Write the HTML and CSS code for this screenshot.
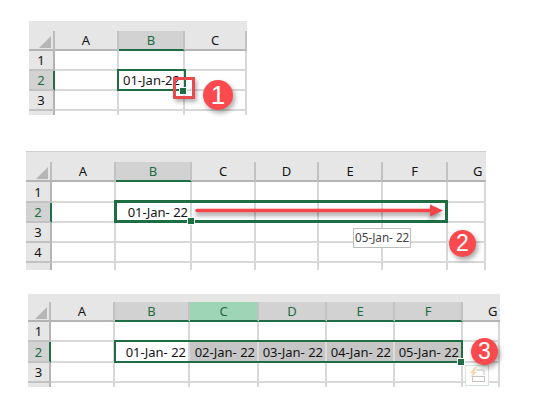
FILE: index.html

```html
<!DOCTYPE html>
<html lang="en">
<head>
  <meta charset="UTF-8" />
  <meta name="viewport" content="width=device-width, initial-scale=1.0"/>
  <title>Fill dates across cells</title>
  <link rel="stylesheet" href="styles.css">
</head>
<body>
  <main class="page">

    <!-- Step 1: the cell and its fill handle -->
    <section class="sheet sheet-one">
      <div class="strip"></div>
      <div class="corner"></div>
      <div class="col-head">A</div><div class="col-head active">B</div><div class="col-head">C</div>

      <div class="row-head">1</div><div class="cell"></div><div class="cell"></div><div class="cell"></div>
      <div class="row-head active">2</div><div class="cell"></div><div class="cell left">01-Jan-22</div><div class="cell"></div>
      <div class="row-head">3</div><div class="cell"></div><div class="cell"></div><div class="cell"></div>
      <div class="row-head tail"></div><div class="cell tail"></div><div class="cell tail"></div><div class="cell tail"></div>

      <div class="selection"></div>
      <div class="handle"></div>
      <div class="highlight"></div>
      <div class="badge">1</div>
    </section>

    <!-- Step 2: dragging across the row -->
    <section class="sheet sheet-two">
      <div class="strip"></div>
      <div class="corner"></div>
      <div class="col-head">A</div><div class="col-head active">B</div><div class="col-head">C</div><div class="col-head">D</div><div class="col-head">E</div><div class="col-head">F</div><div class="col-head cut">G</div>

      <div class="row-head">1</div><div class="cell"></div><div class="cell"></div><div class="cell"></div><div class="cell"></div><div class="cell"></div><div class="cell"></div><div class="cell"></div>
      <div class="row-head active">2</div><div class="cell"></div><div class="cell date">01-Jan- 22</div><div class="cell"></div><div class="cell"></div><div class="cell"></div><div class="cell"></div><div class="cell"></div>
      <div class="row-head">3</div><div class="cell"></div><div class="cell"></div><div class="cell"></div><div class="cell"></div><div class="cell"></div><div class="cell"></div><div class="cell"></div>
      <div class="row-head">4</div><div class="cell"></div><div class="cell"></div><div class="cell"></div><div class="cell"></div><div class="cell"></div><div class="cell"></div><div class="cell"></div>
      <div class="row-head tail"></div><div class="cell tail"></div><div class="cell tail"></div><div class="cell tail"></div><div class="cell tail"></div><div class="cell tail"></div><div class="cell tail"></div><div class="cell tail"></div>

      <div class="selection"></div>
      <div class="handle"></div>
      <svg class="arrow" width="256" height="24" viewBox="0 0 256 24">
        <path d="M4 10.5H238" stroke="#f4464a" stroke-width="3.5" stroke-linecap="round" fill="none"/>
        <path d="M237 4.5L250 10.5L237 16.5Z" fill="#f4464a"/>
      </svg>
      <div class="tip">05-Jan- 22</div>
      <div class="badge">2</div>
    </section>

    <!-- Step 3: the filled series -->
    <section class="sheet sheet-three">
      <div class="strip"></div>
      <div class="corner"></div>
      <div class="col-head">A</div><div class="col-head active">B</div><div class="col-head active green">C</div><div class="col-head active">D</div><div class="col-head active">E</div><div class="col-head active">F</div><div class="col-head cut">G</div>

      <div class="row-head">1</div><div class="cell"></div><div class="cell"></div><div class="cell"></div><div class="cell"></div><div class="cell"></div><div class="cell"></div><div class="cell"></div>
      <div class="row-head active">2</div><div class="cell"></div><div class="cell date">01-Jan- 22</div><div class="cell date filled">02-Jan- 22</div><div class="cell date filled">03-Jan- 22</div><div class="cell date filled">04-Jan- 22</div><div class="cell date filled">05-Jan- 22</div><div class="cell"></div>
      <div class="row-head">3</div><div class="cell"></div><div class="cell"></div><div class="cell"></div><div class="cell"></div><div class="cell"></div><div class="cell"></div><div class="cell"></div>
      <div class="row-head tail"></div><div class="cell tail"></div><div class="cell tail"></div><div class="cell tail"></div><div class="cell tail"></div><div class="cell tail"></div><div class="cell tail"></div><div class="cell tail"></div>

      <div class="selection"></div>
      <div class="handle"></div>
      <div class="autofill">
        <svg width="22" height="19" viewBox="0 0 22 19">
          <path d="M9 1L4 7H7L4 12L11 6H8L11 1Z" fill="#f6d3a8"/>
          <path d="M10 4H18V9" stroke="#c4c4c4" fill="none"/>
          <rect x="6.5" y="10.5" width="12" height="5" fill="#fff" stroke="#c4c4c4"/>
        </svg>
      </div>
      <div class="badge">3</div>
    </section>

  </main>
</body>
</html>
```

FILE: styles.css

```css
body {
  margin: 0;
  background-color: #fff;
  font-family: 'Noto Sans', sans-serif;
}
.page {
  display: flex;
  flex-direction: column;
  align-items: flex-start;
  padding-top: 21px;
}

/* Sheets */
.sheet {
  position: relative;
  display: grid;
  font-size: 13px;
  color: #141414;
}
.sheet-one {
  margin-left: 29px;
  grid-template-columns: 26px 64px 66px 62px;
  grid-template-rows: 10px 20px 20px 20px 20px 4px;
}
.sheet-two {
  margin-top: 36px;
  margin-left: 26px;
  grid-template-columns: 26px 64px 76px 64px 63px 64px 65px 38px;
  grid-template-rows: 11px 20px 21px 20px 20px 20px 7px;
}
.sheet-three {
  margin-top: 24px;
  margin-left: 28px;
  grid-template-columns: 23px 64px 75px 69px 68px 68px 68px 37px;
  grid-template-rows: 8px 20px 20px 21px 20px 4px;
}

/* Headers */
.strip {
  grid-column: 1 / -1;
  background-color: #e6e6e6;
}
.sheet-two .strip {
  border-top: 1px solid #cfcfcf;
}
.corner {
  display: flex;
  justify-content: flex-end;
  align-items: flex-end;
  padding: 0 2px 1px 0;
  background-color: #e6e6e6;
  border-right: 2px solid #bcbcbc;
  border-bottom: 2px solid #b4b4b4;
}
.corner::after {
  content: "";
  width: 12px;
  height: 12px;
  background-color: #b6b6b6;
  clip-path: polygon(100% 0, 100% 100%, 0 100%);
}
.col-head {
  display: flex;
  justify-content: center;
  align-items: center;
  background-color: #e6e6e6;
  border-right: 2px solid #c2c2c2;
  border-bottom: 2px solid #b4b4b4;
}
.col-head.cut {
  justify-content: flex-start;
  padding-left: 25px;
  border-right: 0;
}
.col-head.active {
  background-color: #d2d2d2;
  color: #1f6b43;
  border-bottom-color: #1f6e43;
}
.col-head.green {
  background-color: #9fd5b7;
}
.row-head {
  display: flex;
  justify-content: center;
  align-items: center;
  overflow: hidden;
  background-color: #e6e6e6;
  border-right: 2px solid #b4b4b4;
  border-bottom: 2px solid #c2c2c2;
}
.row-head.active {
  background-color: #d2d2d2;
  color: #1f6b43;
  border-right-color: #1f6e43;
}

/* Cells */
.cell {
  display: flex;
  align-items: center;
  justify-content: flex-end;
  overflow: hidden;
  white-space: nowrap;
  border-right: 2px solid #d8d8d8;
  border-bottom: 2px solid #d8d8d8;
}
.cell:last-of-type {
  border-right: 0;
}
.cell.left {
  justify-content: flex-start;
  padding-left: 4px;
}
.cell.date {
  padding-right: 2px;
}
.cell.filled {
  background-color: #c6c6c6;
  border-right-color: #dcdcdc;
}
.tail {
  border-bottom: 0;
}

/* Things lying over the grid */
.selection {
  position: absolute;
  box-sizing: border-box;
  border: 2px solid #1f6e43;
}
.sheet-one .selection {
  left: 88px;
  top: 48px;
  width: 69px;
  height: 22px;
}
.sheet-two .selection {
  left: 88px;
  top: 49px;
  width: 334px;
  height: 23px;
  border-width: 3px;
}
.sheet-three .selection {
  left: 86px;
  top: 46px;
  width: 349px;
  height: 23px;
}
.handle {
  position: absolute;
  width: 6px;
  height: 6px;
  background-color: #1f6e43;
  box-shadow: 0 0 0 1px #fff;
}
.sheet-one .handle {
  left: 151px;
  top: 67px;
}
.sheet-two .handle {
  left: 162px;
  top: 67px;
}
.sheet-three .handle {
  left: 430px;
  top: 65px;
}
.highlight {
  position: absolute;
  left: 144px;
  top: 56px;
  width: 22px;
  height: 22px;
  box-sizing: border-box;
  border: 3px solid #e8494c;
  box-shadow: 2px 3px 4px rgba(0,0,0,0.3);
}
.arrow {
  position: absolute;
  left: 167px;
  top: 49px;
  filter: drop-shadow(0 3px 2px rgba(0,0,0,0.45));
}
.tip {
  position: absolute;
  left: 327px;
  top: 77px;
  padding: 0 1px;
  height: 18px;
  line-height: 17px;
  font-size: 11.7px;
  color: #444;
  background-color: #fff;
  border: 1px solid #bdbdbd;
}
.badge {
  position: absolute;
  display: flex;
  justify-content: center;
  align-items: center;
  width: 27px;
  height: 27px;
  border-radius: 50%;
  background-color: #fb4a4e;
  color: #fff;
  font-family: 'Liberation Sans', sans-serif;
  font-size: 23px;
  box-shadow: 2px 3px 5px rgba(0,0,0,0.35);
}
.sheet-one .badge {
  left: 174px;
  top: 59px;
  width: 30px;
  height: 30px;
  font-size: 26px;
}
.sheet-two .badge {
  left: 423px;
  top: 79px;
}
.sheet-three .badge {
  left: 443px;
  top: 44px;
}
.autofill {
  position: absolute;
  left: 437px;
  top: 71px;
  box-sizing: border-box;
  width: 24px;
  height: 21px;
  background-color: #fff;
  border: 1px solid #d6e4d9;
}
```
